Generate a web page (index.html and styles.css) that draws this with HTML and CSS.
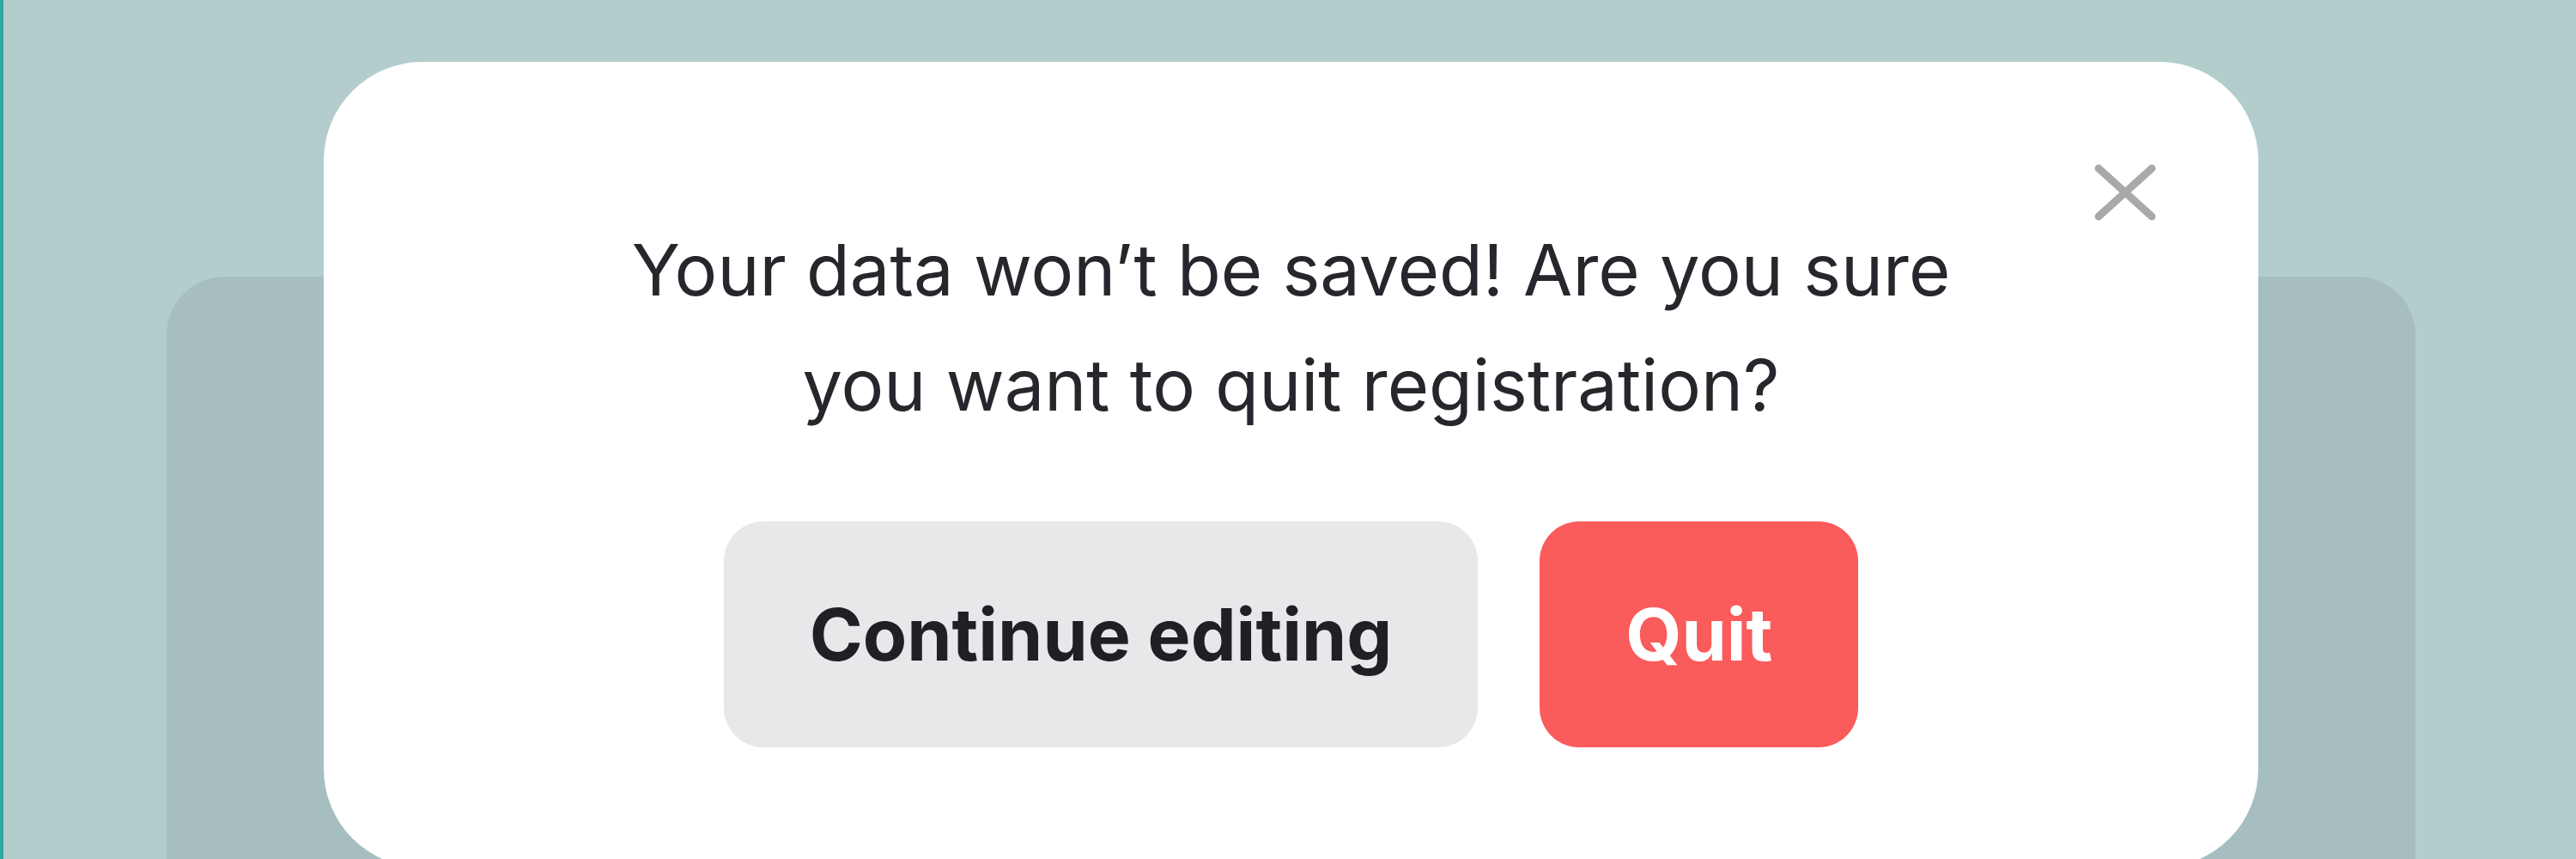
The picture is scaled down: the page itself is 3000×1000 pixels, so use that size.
FILE: index.html
```html
<!DOCTYPE html>
<html lang="en">
<head>
    <meta charset="UTF-8">
    <meta name="viewport" content="width=device-width, initial-scale=1.0">
    <title>Quit registration</title>
    <link rel="stylesheet" href="styles.css">
</head>
<body>
    <div class="screen">
        <div class="back-card"></div>
        <div class="modal">
            <button class="close" aria-label="Close">
                <svg width="72" height="72" viewBox="0 0 72 72">
                    <path d="M5 8 L67 64 M67 8 L5 64" stroke="#a9a9ac" stroke-width="9" stroke-linecap="round" fill="none"/>
                </svg>
            </button>
            <p class="message">Your data won’t be saved! Are you sure<br>you want to quit registration?</p>
            <div class="actions">
                <button class="btn btn-secondary">Continue editing</button>
                <button class="btn btn-danger">Quit</button>
            </div>
        </div>
    </div>
</body>
</html>
```

FILE: styles.css
```css
html, body {
    margin: 0;
    height: 100%;
}
body {
    background-color: #b3cdcd;
    border-left: 4px solid #2fa8a0;
    overflow: hidden;
    font-family: Inter, "Noto Sans", sans-serif;
}
.screen {
    display: grid;
    justify-items: center;
    align-items: start;
    height: 100%;
    padding-left: 3px;
}
.back-card {
    grid-area: 1 / 1;
    width: 2619px;
    height: 900px;
    margin-top: 322px;
    background-color: #a6bebf;
    border-radius: 68px;
}
.modal {
    grid-area: 1 / 1;
    position: relative;
    width: 2253px;
    height: 938px;
    margin-top: 72px;
    background-color: #fff;
    border-radius: 115px;
    display: flex;
    flex-direction: column;
    align-items: center;
    box-sizing: border-box;
    padding-top: 175px;
}
.close {
    position: absolute;
    top: 116px;
    right: 119px;
    width: 72px;
    height: 72px;
    padding: 0;
    border: none;
    background: none;
    cursor: pointer;
}
.close svg {
    display: block;
}
.message {
    margin: 0;
    font-size: 83px;
    line-height: 134px;
    color: #26272c;
    text-align: center;
}
.actions {
    display: flex;
    gap: 72px;
    margin-top: 92px;
}
.btn {
    height: 263px;
    padding: 0 100px;
    border: none;
    border-radius: 46px;
    font-family: inherit;
    font-size: 84px;
    font-weight: 700;
    cursor: pointer;
}
.btn-secondary {
    background-color: #e8e8ea;
    color: #1f2026;
}
.btn-danger {
    background-color: #fa5b5b;
    color: #fff;
}
```
